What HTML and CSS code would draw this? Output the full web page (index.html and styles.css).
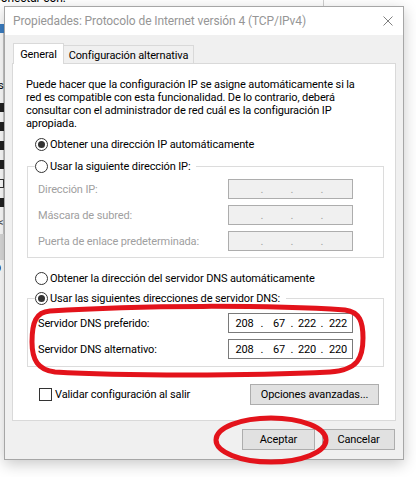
FILE: index.html
```html
<!DOCTYPE html>
<html lang="es">
<head>
<meta charset="utf-8">
<title>Propiedades: Protocolo de Internet versión 4 (TCP/IPv4)</title>
<link rel="stylesheet" href="styles.css">
</head>
<body>
<div class="bgwin">
  <div class="bg-caption">Conectar con:</div>
  <div class="bg-adapter"></div>
  <div class="bg-label">si</div>
  <div class="bg-list">
    <span class="bg-item"></span>
    <span class="bg-item"></span>
    <span class="bg-item"></span>
    <span class="bg-item"></span>
    <span class="bg-item off"></span>
    <span class="bg-item"></span>
  </div>
  <div class="bg-arrow">&lt;</div>
  <div class="bg-scroll"></div>
  <div class="bg-desc">D</div>
</div>

<div class="dialog">
  <div class="titlebar">
    <span class="title">Propiedades: Protocolo de Internet versión 4 (TCP/IPv4)</span>
    <span class="close"><svg width="10" height="10" viewBox="0 0 10 10"><path d="M0.5 0.5L9.5 9.5M9.5 0.5L0.5 9.5" stroke="#808080" stroke-width="1" fill="none"/></svg></span>
  </div>
  <div class="body">
    <div class="tabs">
      <div class="tab active">General</div>
      <div class="tab">Configuración alternativa</div>
    </div>
    <div class="panel">
      <p class="intro">Puede hacer que la configuración IP se asigne automáticamente si la<br>red es compatible con esta funcionalidad. De lo contrario, deberá<br>consultar con el administrador de red cuál es la configuración IP<br>apropiada.</p>
      <div class="opt first"><span class="radio checked"></span><span>Obtener una dirección IP automáticamente</span></div>
      <fieldset class="group">
        <legend class="opt"><span class="radio"></span><span>Usar la siguiente dirección IP:</span></legend>
        <div class="field disabled"><span>Dirección IP:</span><span class="ip"><span class="seg s1"></span><span class="dot">.</span><span class="seg s2"></span><span class="dot">.</span><span class="seg s3"></span><span class="dot">.</span><span class="seg s4"></span></span></div>
        <div class="field disabled"><span>Máscara de subred:</span><span class="ip"><span class="seg s1"></span><span class="dot">.</span><span class="seg s2"></span><span class="dot">.</span><span class="seg s3"></span><span class="dot">.</span><span class="seg s4"></span></span></div>
        <div class="field disabled"><span>Puerta de enlace predeterminada:</span><span class="ip"><span class="seg s1"></span><span class="dot">.</span><span class="seg s2"></span><span class="dot">.</span><span class="seg s3"></span><span class="dot">.</span><span class="seg s4"></span></span></div>
      </fieldset>
      <div class="opt dns-auto"><span class="radio"></span><span>Obtener la dirección del servidor DNS automáticamente</span></div>
      <fieldset class="group dns">
        <legend class="opt"><span class="radio checked"></span><span>Usar las siguientes direcciones de servidor DNS:</span></legend>
        <div class="field"><span>Servidor DNS preferido:</span><span class="ip on"><span class="seg s1">208</span><span class="dot">.</span><span class="seg s2 r">67</span><span class="dot">.</span><span class="seg s3">222</span><span class="dot">.</span><span class="seg s4">222</span></span></div>
        <div class="field"><span>Servidor DNS alternativo:</span><span class="ip on"><span class="seg s1">208</span><span class="dot">.</span><span class="seg s2 r">67</span><span class="dot">.</span><span class="seg s3">220</span><span class="dot">.</span><span class="seg s4">220</span></span></div>
      </fieldset>
      <div class="validate">
        <div class="check"><span class="box"></span><span>Validar configuración al salir</span></div>
        <button class="btn adv">Opciones avanzadas...</button>
      </div>
    </div>
    <div class="actions">
      <button class="btn">Aceptar</button>
      <button class="btn">Cancelar</button>
    </div>
  </div>
</div>

<svg class="annot" width="416" height="477" viewBox="0 0 416 477">
  <path d="M50 311 C140 305 270 305 345 310 C360 312 363 322 363 338 C363 358 358 370 330 372 C250 376 120 376 55 372 C38 370 32 360 32 342 C32 322 36 312 50 311 Z" fill="none" stroke="#e3131b" stroke-width="5"/>
  <ellipse cx="271" cy="440" rx="55" ry="22" fill="none" stroke="#e3131b" stroke-width="5"/>
</svg>
</body>
</html>
```

FILE: styles.css
```css
* { box-sizing: border-box; }
html, body { margin: 0; padding: 0; }
body {
  width: 416px;
  height: 477px;
  overflow: hidden;
  position: relative;
  background: #ffffff;
  font-family: Roboto, "Liberation Sans", Arial, sans-serif;
  font-size: 11px;
  letter-spacing: -0.12px;
  color: #000;
}

/* window behind the dialog */
.bgwin {
  position: absolute;
  left: 0;
  top: 0;
  width: 324px;
  height: 420px;
  background: linear-gradient(#c8c8c8, #c8c8c8) no-repeat 3px 30px / 1px 205px, #fff;
  border-right: 1px solid #cfcfcf;
  display: flex;
  flex-direction: column;
  align-items: flex-start;
}
.bg-caption { margin: -9px 0 0 -7px; font-size: 12px; line-height: 14px; }
.bg-adapter { margin-top: 19px; width: 4px; height: 9px; background: #3d7fc4; }
.bg-label { margin: 47px 0 0 -2px; line-height: 12px; font-size: 11px; }
.bg-list { margin-top: 11px; display: flex; flex-direction: column; gap: 10px; }
.bg-item { display: block; width: 4px; height: 9px; background: #222; }
.bg-item.off { background: #fff; border: 1px solid #333; border-left: none; }
.bg-arrow { margin: 11px 0 0 -2px; line-height: 10px; color: #555; }
.bg-scroll { margin-top: 6px; width: 4px; height: 26px; background: #dcdcdc; }
.bg-desc { margin: 3px 0 0 -6px; line-height: 12px; }

/* dialog */
.dialog {
  position: absolute;
  left: 4px;
  top: 6px;
  width: 400px;
  height: 454px;
  border: 1px solid #a6a6a6;
  background: #f0f0f0;
  box-shadow: 0 4px 14px rgba(0, 0, 0, 0.22);
  display: flex;
  flex-direction: column;
}
.titlebar {
  height: 28px;
  background: #fff;
  display: flex;
  align-items: center;
  padding-left: 8px;
  color: #969696;
  font-size: 12px;
  letter-spacing: -0.1px;
}
.title { flex: 1; }
.close {
  width: 30px;
  height: 28px;
  display: flex;
  align-items: center;
  justify-content: center;
}
.body {
  flex: 1;
  padding: 8px 7px 8px 7px;
  display: flex;
  flex-direction: column;
}

.tabs {
  display: flex;
  align-items: flex-end;
  height: 21px;
  margin: 0 0 -1px 1px;
  position: relative;
  z-index: 1;
}
.tab {
  height: 18px;
  margin-bottom: 1px;
  width: 131px;
  margin-left: -1px;
  border: 1px solid #d9d9d9;
  border-bottom: none;
  background: #f0f0f0;
  display: flex;
  align-items: center;
  justify-content: center;
  padding-top: 2px;
}
.tab.active {
  height: 21px;
  margin: 0;
  width: 51px;
  background: #fff;
  position: relative;
  z-index: 2;
  padding-top: 0;
}

.panel {
  background: #fff;
  border: 1px solid #d9d9d9;
  padding: 14px 11px 15px 13px;
  display: flex;
  flex-direction: column;
}
.intro { margin: 0; line-height: 13px; }

.opt {
  display: flex;
  align-items: center;
  height: 20px;
  gap: 2px;
  padding-left: 9px;
}
.opt.first { margin-top: 4px; }
.radio {
  width: 13px;
  height: 13px;
  border: 1px solid #333;
  border-radius: 50%;
  background: #fff;
  display: flex;
  align-items: center;
  justify-content: center;
  flex: none;
}
.radio.checked::after {
  content: "";
  width: 7px;
  height: 7px;
  border-radius: 50%;
  background: #333;
}

.group {
  margin: 2px 0 0 1px;
  padding: 3px 30px 6px 7px;
  border: 1px solid #dcdcdc;
  min-width: 0;
  display: flex;
  flex-direction: column;
  gap: 6px;
}
.group legend.opt {
  padding: 0 6px 0 0;
  margin: 0;
}
.group.dns { margin-top: 0; padding-top: 5px; padding-bottom: 7px; }
.opt.dns-auto { margin-top: 10px; }

.field {
  display: flex;
  align-items: center;
  justify-content: space-between;
  height: 20px;
  padding-left: 3px;
}
.field.disabled { color: #a0a0a0; }

.ip {
  width: 125px;
  height: 20px;
  border: 1px solid #adadad;
  background: #f0f0f0;
  display: flex;
  align-items: center;
  color: #a0a0a0;
}
.ip.on { background: #fff; border-color: #7a7a7a; color: #000; }
.seg { text-align: center; }
.seg.r { padding-left: 4px; }
.s1 { width: 31px; }
.s2 { width: 26px; }
.s3 { width: 26px; }
.s4 { flex: 1; }
.dot { width: 4px; text-align: center; }

.validate {
  margin-top: 17px;
  height: 21px;
  display: flex;
  align-items: center;
  justify-content: space-between;
  padding: 0 5px 0 13px;
}
.check { display: flex; align-items: center; gap: 3px; }
.box {
  width: 13px;
  height: 13px;
  border: 1px solid #333;
  background: #fff;
}

.btn {
  font: inherit;
  letter-spacing: inherit;
  color: #000;
  background: #e1e1e1;
  border: 1px solid #adadad;
  height: 21px;
  width: 73px;
  padding: 0;
  margin: 0;
}
.btn.adv { width: 129px; }

.actions {
  margin-top: 8px;
  display: flex;
  justify-content: flex-end;
  gap: 7px;
  padding-right: 1px;
}

.annot {
  position: absolute;
  left: 0;
  top: 0;
  pointer-events: none;
}
```
